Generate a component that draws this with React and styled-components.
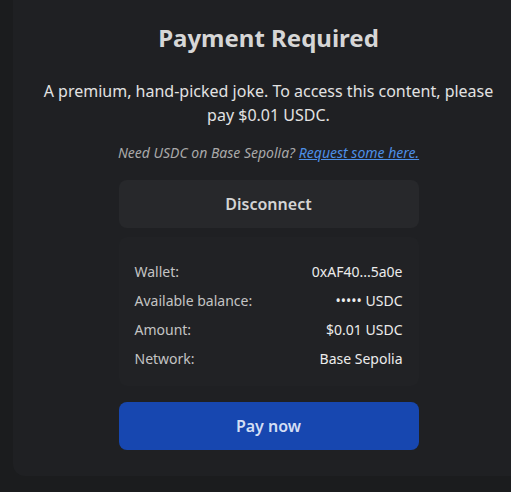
import React from "react";
import styled, { createGlobalStyle } from "styled-components";

const GlobalStyle = createGlobalStyle`
  html, body {
    margin: 0;
    padding: 0;
    background: #1b1c1e;
    overflow: hidden;
  }
  body {
    font-family: "Noto Sans", "Open Sans", sans-serif;
    color: #dcdcdc;
  }
`;

// Page card, its top edge is scrolled out of view
const Card = styled.section`
  margin-left: 13px;
  width: 511px;
  background: #1f2023;
  border-radius: 0 0 12px 12px;
  padding: 22px 0 26px;
  display: flex;
  flex-direction: column;
  align-items: center;
`;

const Title = styled.h1`
  margin: 0;
  font-size: 24px;
  font-weight: 700;
  line-height: 32px;
  color: #d6d6d6;
`;

const Description = styled.p`
  margin: 25px 0 0;
  width: 460px;
  font-size: 16px;
  line-height: 24px;
  text-align: center;
  color: #e2e2e2;
`;

const Hint = styled.p`
  margin: 16px 0 0;
  font-size: 14px;
  line-height: 20px;
  font-style: italic;
  color: #a9a9a9;

  a {
    color: #4d8fe6;
    text-decoration: underline;
  }
`;

const Panel = styled.div`
  width: 300px;
  margin-top: 17px;
  display: flex;
  flex-direction: column;
  gap: 9px;
`;

const Button = styled.button`
  height: 48px;
  width: 100%;
  border: none;
  border-radius: 8px;
  font-family: inherit;
  font-size: 16px;
  font-weight: 600;
  cursor: pointer;
  background: ${(p) => (p.$primary ? "#1747b0" : "#27282b")};
  color: ${(p) => (p.$primary ? "#d3def4" : "#d4d4d4")};
`;

const Info = styled.div`
  background: #212225;
  border-radius: 8px;
  padding: 20px 16px 13px;
  display: flex;
  flex-direction: column;
  margin-bottom: 7px;
`;

const Row = styled.div`
  display: flex;
  justify-content: space-between;
  align-items: center;
  height: 29px;
  font-size: 14px;
`;

const Label = styled.span`
  color: #c4c4c4;
`;

const Value = styled.span`
  color: #ececec;
  font-weight: 400;
`;

const rows = [
  ["Wallet:", "0xAF40...5a0e"],
  ["Available balance:", "\u2022\u2022\u2022\u2022\u2022 USDC"],
  ["Amount:", "$0.01 USDC"],
  ["Network:", "Base Sepolia"],
];

const App = () => (
  <>
    <GlobalStyle />
    <Card>
      <Title>Payment Required</Title>
      <Description>
        A premium, hand-picked joke. To access this content, please pay $0.01 USDC.
      </Description>
      <Hint>
        Need USDC on Base Sepolia? <a href="#faucet">Request some here.</a>
      </Hint>
      <Panel>
        <Button>Disconnect</Button>
        <Info>
          {rows.map(([k, v]) => (
            <Row key={k}>
              <Label>{k}</Label>
              <Value>{v}</Value>
            </Row>
          ))}
        </Info>
        <Button $primary>Pay now</Button>
      </Panel>
    </Card>
  </>
);

export default App;
